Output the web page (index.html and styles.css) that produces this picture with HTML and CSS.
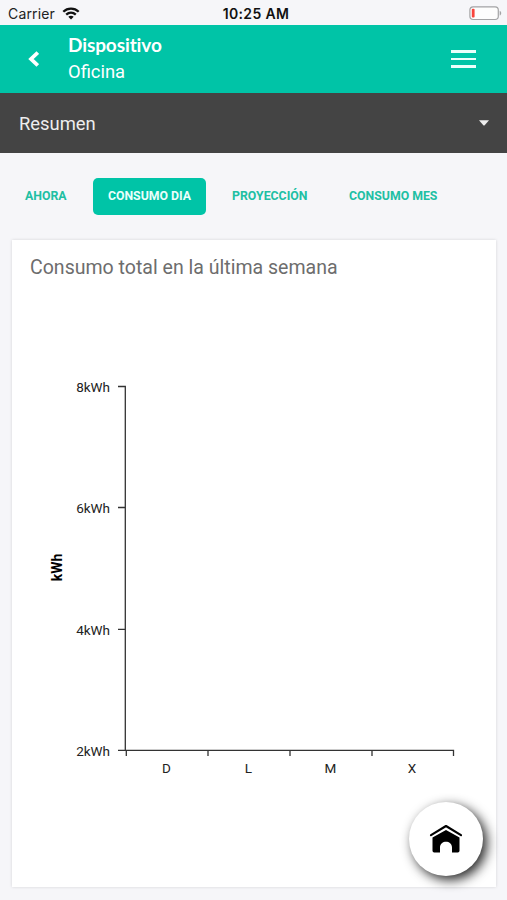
FILE: index.html
```html
<!DOCTYPE html>
<html lang="es">
<head>
<meta charset="utf-8">
<title>Dispositivo</title>
<link rel="stylesheet" href="styles.css">
</head>
<body>
<div class="status">
  <div class="carrier"><span>Carrier</span>
    <svg width="18" height="13" viewBox="0 0 18 13" fill="none" stroke="#111" stroke-width="2.3"><path d="M1.3 4.7C5.6 .5 12.4 .5 16.7 4.7M4.2 7.7C7 5.1 11 5.1 13.8 7.7"/><path d="M9 12.5 6.3 9.8C7.8 8.4 10.2 8.4 11.7 9.8Z" fill="#111" stroke="none"/></svg>
  </div>
  <span class="time">10:25 AM</span>
  <svg class="battery" width="33" height="15" viewBox="0 0 33 15"><rect x=".9" y=".9" width="28.4" height="12.6" rx="3.2" fill="#fdfdfd" stroke="#a3a3a5" stroke-width="1.2"/><rect x="2.8" y="2.8" width="2.8" height="8.8" rx="1" fill="#f8453c"/><path d="M30.7 4.8C32.7 5.5 32.7 8.9 30.7 9.6Z" fill="#a3a3a5"/></svg>
</div>
<header class="header">
  <svg class="back" width="12" height="16" viewBox="0 0 12 16" fill="none" stroke="#fff" stroke-width="3.8"><path d="M10.8 1.5 4 8l6.8 6.5"/></svg>
  <div class="titles"><h1>Dispositivo</h1><p>Oficina</p></div>
  <div class="menu"><i></i><i></i><i></i></div>
</header>
<div class="select"><span>Resumen</span><svg width="10" height="6" viewBox="0 0 10 6"><path d="M0 .3H10L5.7 5.2Q5 5.8 4.3 5.2Z" fill="#eee"/></svg></div>
<nav class="tabs"><a class="ahora">AHORA</a><a class="active">CONSUMO DIA</a><a class="proy">PROYECCIÓN</a><a class="mes">CONSUMO MES</a></nav>
<main class="card">
  <h2>Consumo total en la última semana</h2>
  <svg class="chart" width="484" height="440" viewBox="12 360 484 440">
    <g fill="none" stroke="#333" stroke-width="1.3">
      <path d="M118 386.5H125.3V750.3M118 507.5H125.3M118 629.3H125.3M118 750.3H453.5V756M126.3 750V756M208 750V756M290 750V756M372 750V756"/>
    </g>
    <g class="ylabels"><text x="110" y="392">8kWh</text><text x="110" y="513">6kWh</text><text x="110" y="635">4kWh</text><text x="110" y="756">2kWh</text></g>
    <g class="xlabels"><text x="166.5" y="773">D</text><text x="248.5" y="773">L</text><text x="330.3" y="773">M</text><text x="412" y="773">X</text></g>
    <text class="unit" transform="translate(62 567.5) rotate(-90)">kWh</text>
  </svg>
</main>
<div class="home">
  <svg width="34" height="30" viewBox="0 0 34 30"><path d="M2 12.1 17 3 32 12.1" fill="none" stroke="#000" stroke-width="2.2" stroke-linecap="round" stroke-linejoin="round"/><path d="M3.5 14.6 17 6.9 30.5 14.6V27.8Q30.5 29.5 28.8 29.5H23V24.5C23 16.8 11 16.8 11 24.5V29.5H5.2Q3.5 29.5 3.5 27.8Z"/></svg>
</div>
</body>
</html>
```
FILE: styles.css
```css
* { box-sizing: border-box; margin: 0; padding: 0; }
body { width: 507px; height: 900px; overflow: hidden; background: #f6f6f9; font-family: Roboto, sans-serif; position: relative; }
.status { height: 25px; display: grid; grid-template-columns: 1fr auto 1fr; align-items: center; padding: 2px 5px 0 8px; font: 14px/22px Inter, sans-serif; color: #222; }
.carrier { display: flex; align-items: center; gap: 7px; }
.carrier span { letter-spacing: .15px; }
.time { font-size: 14px; font-weight: 600; letter-spacing: .35px; color: #111; margin-left: 2px; }
.battery { justify-self: end; }
.header { height: 68px; background: #00c4a7; display: flex; align-items: center; padding: 0 31px 0 27px; color: #fff; }
.titles { margin-left: 29px; flex: 1; }
h1 { font: 700 19px/26px Lato, sans-serif; letter-spacing: -.1px; margin-top: -1px; font-variant-ligatures: none; }
.titles p { font-size: 18.4px; line-height: 27px; }
.menu { width: 25px; display: grid; gap: 5px; }
.menu i { height: 2.5px; background: #eafffb; }
.select { height: 60px; background: #444; color: #eee; display: flex; align-items: center; justify-content: space-between; padding: 0 18px 0 19px; font-size: 18.4px; }
.tabs { height: 87px; display: flex; align-items: center; font-size: 12.3px; font-weight: 700; color: #20bfa3; padding-left: 25px; }
.tabs a { white-space: nowrap; height: 37px; line-height: 36px; }
.ahora { width: 68px; }
.active { width: 113px; border-radius: 5px; background: #00c4a7; color: #eafffb; text-align: center; }
.proy { margin-left: 26px; width: 117px; }
.card { margin-left: 12px; width: 484px; height: 647px; background: #fff; box-shadow: 0 0 3px rgba(0,0,0,.14); }
h2 { height: 120px; padding: 14px 0 0 18px; font-size: 19.55px; font-weight: 400; line-height: 27px; color: #6d6d6d; }
.chart { display: block; }
.chart text { font-size: 13.5px; fill: #222; }
.ylabels { text-anchor: end; }
.xlabels, .unit { text-anchor: middle; }
.chart .unit { font-weight: 700; font-size: 14px; fill: #000; }
.home { position: absolute; left: 409px; top: 802px; width: 74px; height: 74px; border-radius: 50%; background: #fff; box-shadow: 4px 4px 12px rgba(0,0,0,.85); display: flex; align-items: center; justify-content: center; padding-bottom: 3px; }
```
